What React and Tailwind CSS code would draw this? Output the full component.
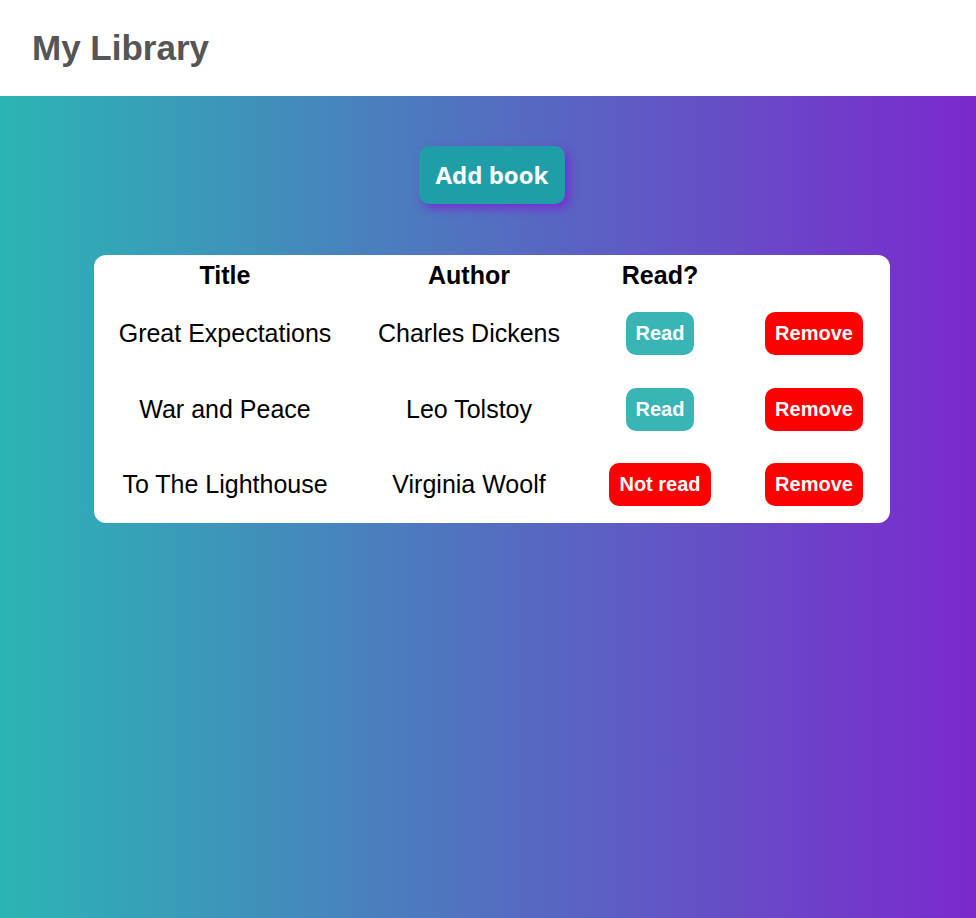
const books = [
  { title: "Great Expectations", author: "Charles Dickens", read: true },
  { title: "War and Peace", author: "Leo Tolstoy", read: true },
  { title: "To The Lighthouse", author: "Virginia Woolf", read: false },
];

export default function App() {
  return (
    <div className="min-h-[918px] flex flex-col font-['Liberation_Sans',Arial,sans-serif]">
      <header className="h-[96px] bg-white flex items-center px-8">
        <h1 className="text-[35px] font-bold text-[#555555]">My Library</h1>
      </header>

      <main className="flex-1 bg-[linear-gradient(to_right,#2bb5b4,#7b29cd)] flex flex-col items-center pt-[50px] pl-2">
        <button className="bg-[#1f9ea8] text-white text-[24px] font-bold font-['Open_Sans',sans-serif] px-[17px] py-[11px] rounded-[10px] shadow-[4px_4px_10px_#7a2bd4]">
          Add book
        </button>

        <div className="mt-[51px] w-[796px] bg-white rounded-xl grid grid-cols-[262px_226px_156px_152px] text-black text-[25px]">
          <div className="h-[41px] flex items-center justify-center font-bold">Title</div>
          <div className="h-[41px] flex items-center justify-center font-bold">Author</div>
          <div className="h-[41px] flex items-center justify-center font-bold">Read?</div>
          <div className="h-[41px]"></div>

          {books.map((b) => (
            <>
              <div className="h-[75.5px] flex items-center justify-center">{b.title}</div>
              <div className="h-[75.5px] flex items-center justify-center">{b.author}</div>
              <div className="h-[75.5px] flex items-center justify-center">
                <button
                  className={
                    b.read
                      ? "bg-[#38b5b4] text-white text-[20px] font-bold px-2.5 py-2.5 rounded-[10px] leading-[23px]"
                      : "bg-[#ff0000] text-white text-[20px] font-bold px-2.5 py-2.5 rounded-[10px] leading-[23px]"
                  }
                >
                  {b.read ? "Read" : "Not read"}
                </button>
              </div>
              <div className="h-[75.5px] flex items-center justify-center">
                <button className="bg-[#ff0000] text-white text-[20px] font-bold px-2.5 py-2.5 rounded-[10px] leading-[23px]">
                  Remove
                </button>
              </div>
            </>
          ))}
        </div>
      </main>
    </div>
  );
}
